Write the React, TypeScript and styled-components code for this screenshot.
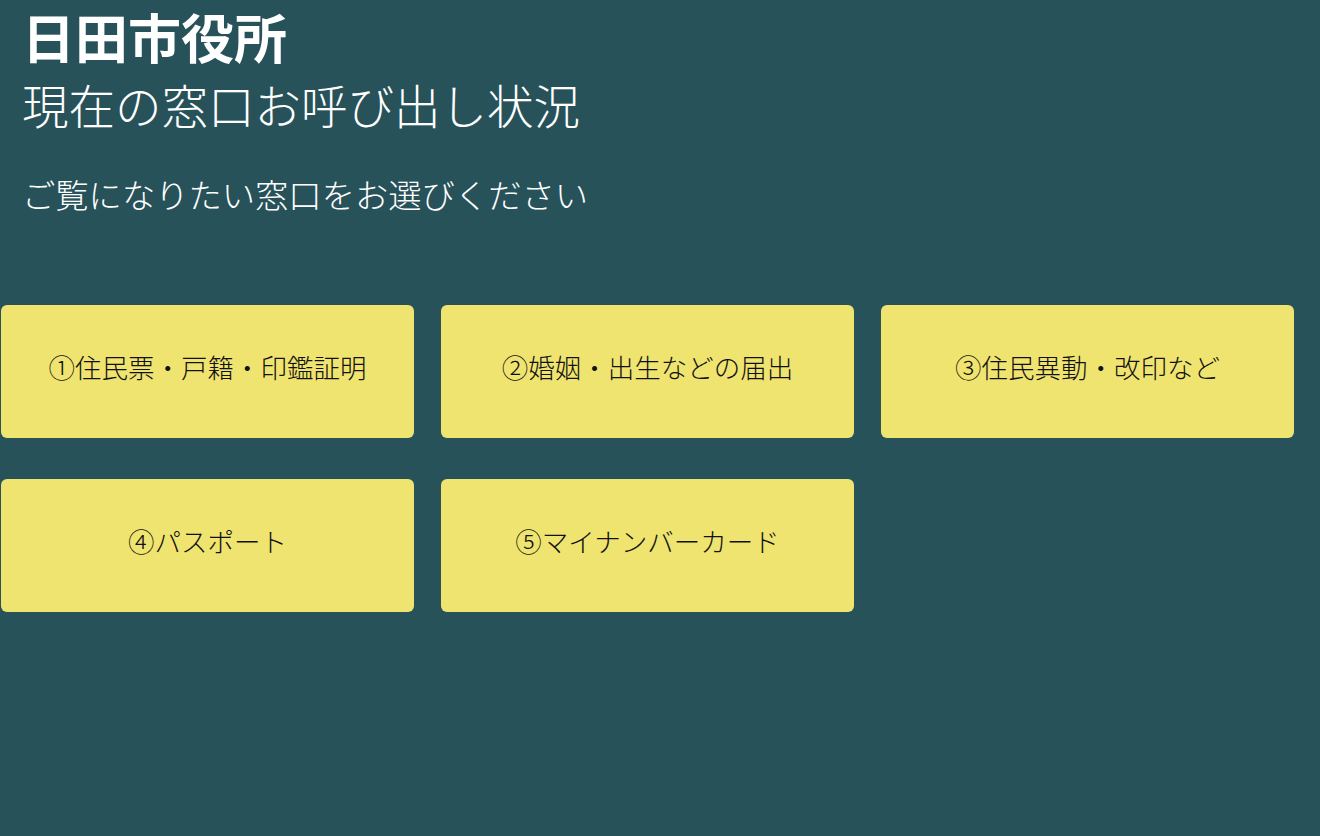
import React from "react";
import styled, { createGlobalStyle } from "styled-components";

const GlobalStyle = createGlobalStyle`
  html, body {
    margin: 0;
    padding: 0;
    background: #27525a;
  }
  body {
    font-family: "Noto Sans CJK JP", "Noto Sans", sans-serif;
  }
`;

const Page = styled.div`
  min-height: 836px;
  background: #27525a;
  color: #ffffff;
  display: flex;
  flex-direction: column;
`;

const Header = styled.header`
  display: flex;
  flex-direction: column;
  padding: 1px 0 0 22px;
`;

const Title = styled.h1`
  margin: 0;
  font-size: 53px;
  font-weight: 700;
  line-height: 70px;
  letter-spacing: 0;
`;

const Subtitle = styled.h2`
  margin: 0;
  font-size: 46.5px;
  font-weight: 300;
  line-height: 65px;
`;

const Prompt = styled.p`
  margin: 36px 0 0 0;
  font-size: 33.3px;
  font-weight: 300;
  line-height: 44px;
`;

const Grid = styled.div`
  display: grid;
  grid-template-columns: repeat(3, 413px);
  column-gap: 27px;
  row-gap: 41px;
  padding-left: 1px;
  margin-top: 89px;
`;

const Counter = styled.button`
  height: 133px;
  border: none;
  border-radius: 6px;
  background: #f0e470;
  color: #111111;
  font-family: "Noto Sans CJK JP", "Noto Sans", sans-serif;
  font-size: 26.5px;
  font-weight: 300;
  display: flex;
  align-items: center;
  justify-content: center;
  padding: 0 0 11px 0;
  cursor: pointer;
`;

const counters = [
  "①住民票・戸籍・印鑑証明",
  "②婚姻・出生などの届出",
  "③住民異動・改印など",
  "④パスポート",
  "⑤マイナンバーカード",
];

export default function App() {
  return (
    <>
      <GlobalStyle />
      <Page>
        <Header>
          <Title>日田市役所</Title>
          <Subtitle>現在の窓口お呼び出し状況</Subtitle>
          <Prompt>ご覧になりたい窓口をお選びください</Prompt>
        </Header>
        <Grid>
          {counters.map((c) => (
            <Counter key={c}>{c}</Counter>
          ))}
        </Grid>
      </Page>
    </>
  );
}
